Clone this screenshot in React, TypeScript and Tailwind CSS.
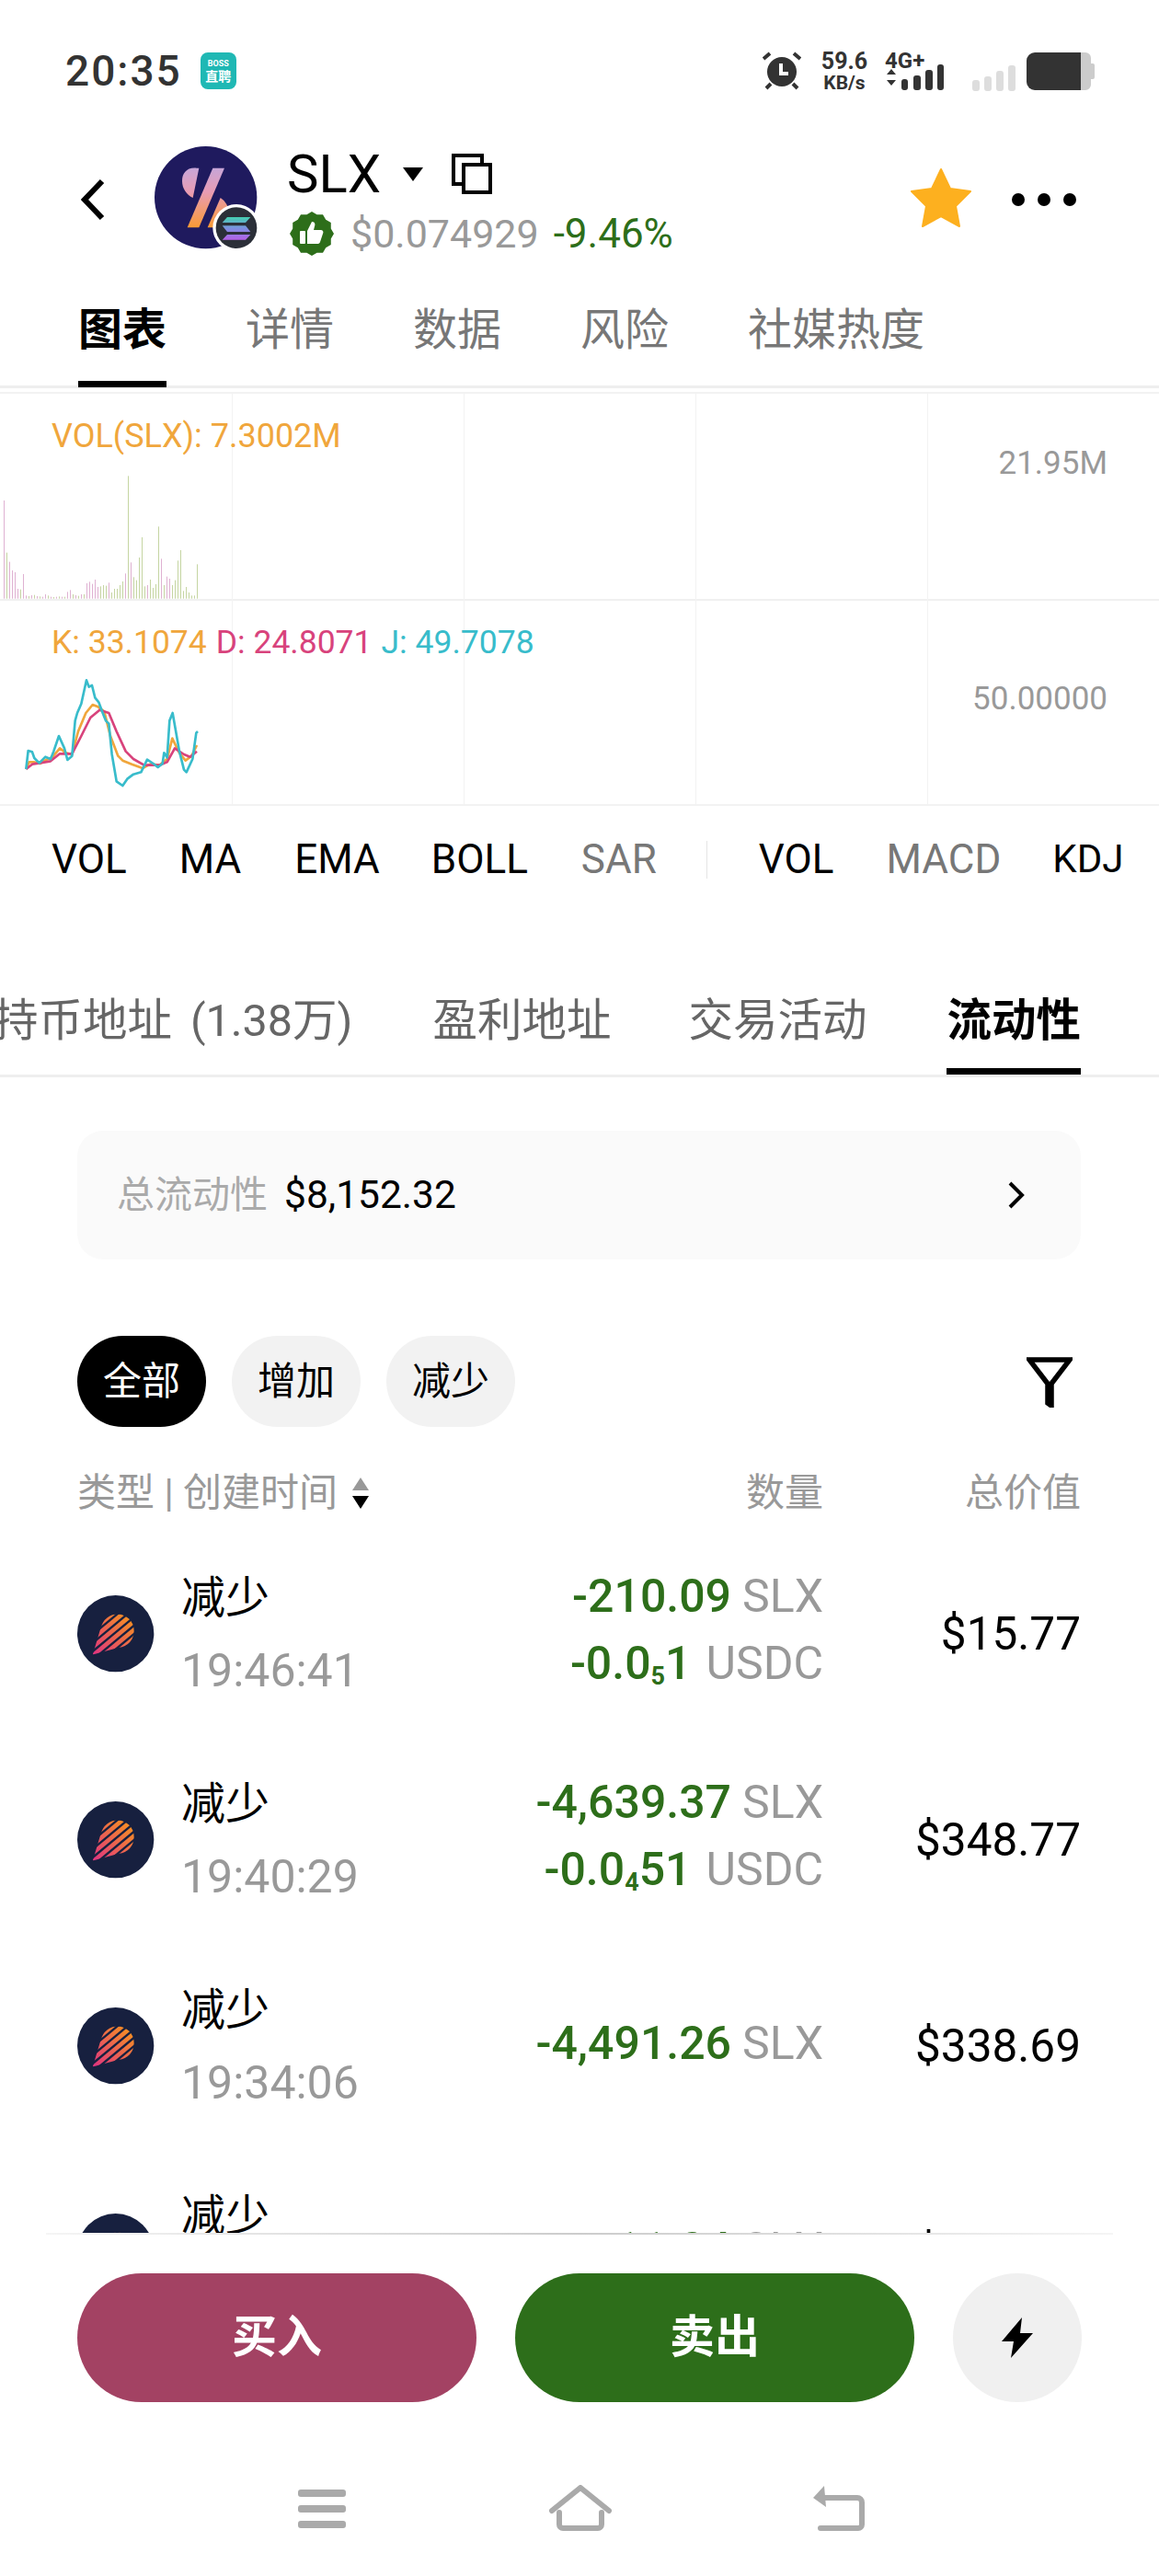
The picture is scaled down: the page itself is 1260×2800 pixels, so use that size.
import { ReactNode } from "react";

const barData: [number, "p" | "g"][] = [
  [320, "p"], [150, "g"], [120, "p"], [92, "p"], [86, "p"], [32, "p"], [30, "g"], [80, "p"], [10, "p"], [8, "g"],
  [11, "p"], [12, "g"], [8, "p"], [7, "g"], [6, "p"], [14, "p"], [10, "g"], [6, "p"], [5, "g"], [6, "p"],
  [7, "g"], [6, "p"], [6, "g"], [22, "p"], [28, "p"], [14, "g"], [11, "p"], [9, "g"], [14, "p"], [14, "g"],
  [50, "p"], [55, "p"], [48, "p"], [62, "p"], [38, "p"], [40, "g"], [44, "g"], [42, "g"], [52, "p"], [20, "g"],
  [32, "g"], [32, "g"], [44, "g"], [56, "g"], [82, "p"], [400, "g"], [118, "p"], [70, "g"], [60, "g"], [134, "g"],
  [200, "g"], [40, "g"], [44, "p"], [62, "g"], [35, "g"], [47, "g"], [235, "g"], [130, "p"], [44, "g"], [72, "p"],
  [65, "p"], [44, "g"], [60, "g"], [124, "g"], [158, "g"], [25, "g"], [38, "g"], [20, "g"], [10, "g"], [10, "g"],
  [112, "g"],
];

const jLine =
  "85,1008 92,948 105,952 112,972 128,988 148,968 165,975 175,950 192,900 210,940 220,978 235,965 245,850 252,825 265,795 282,718 290,740 300,735 310,775 322,790 335,825 345,850 355,860 365,960 380,1048 400,1062 415,1040 435,1025 460,1018 480,977 500,990 515,1002 530,990 535,955 545,970 553,850 563,825 585,950 600,1010 608,1018 628,975 640,890 645,885";
const kLine =
  "85,1008 95,985 110,985 130,990 150,978 170,970 195,940 215,955 235,960 255,885 280,825 302,798 320,805 340,820 360,900 385,965 400,980 430,992 465,1005 490,992 520,995 545,975 562,908 585,955 605,980 625,965 642,930";
const dLine =
  "85,1008 105,992 130,988 165,982 195,958 235,958 265,900 295,840 325,815 355,825 380,885 410,950 435,975 470,995 520,995 545,985 570,940 600,960 620,968 642,950";

// scalloped badge outline behind the thumb
const scallop = Array.from({ length: 24 }, (_, i) => {
  const r = i % 2 === 0 ? 24 : 21.5;
  const a = (i / 24) * Math.PI * 2;
  return `${(24 + r * Math.sin(a)).toFixed(2)},${(24 - r * Math.cos(a)).toFixed(2)}`;
}).join(" ");

// diagonal strokes of the pool logo, clipped to a comet shape
const cometStripes = [-2.5, -1.5, -0.5, 0.5, 1.5, 2.5].map((k) => {
  const cx = 175 + k * 21 * 0.64;
  const cy = 185 + k * 21 * 0.77;
  return `M${cx - 110 * 0.77} ${cy + 110 * 0.64}L${cx + 110 * 0.77} ${cy - 110 * 0.64}`;
});

function StatusBar() {
  return (
    <div className="flex h-[154px] shrink-0 items-center pl-[71px] pr-[70px] text-[#333]">
      <span className="text-[46px] font-medium leading-none tracking-[2px]">20:35</span>
      <div className="ml-[20px] flex h-[40px] w-[39px] flex-col items-center justify-center rounded-[8px] bg-[#1fb8b4] text-white">
        <span className="text-[9px] font-bold leading-[11px]">BOSS</span>
        <span className="text-[14px] font-bold leading-[16px]">直聘</span>
      </div>
      <div className="ml-auto flex items-center">
        <svg width="42" height="42" viewBox="0 0 42 42">
          <circle cx="21" cy="22" r="16" fill="#333" />
          <path d="M20 13v11h8" fill="none" stroke="#fff" strokeWidth="4" />
          <path d="M1 8l7-6M41 8l-7-6M4 40l5-5M38 40l-5-5" stroke="#333" strokeWidth="4" />
        </svg>
        <div className="ml-[22px] flex w-[50px] flex-col items-center font-bold leading-none">
          <span className="text-[25px] leading-[23px]">59.6</span>
          <span className="mt-[3px] text-[21px] leading-[18px]">KB/s</span>
        </div>
        <div className="ml-[19px] flex h-[42px] w-[64px] flex-col">
          <span className="text-[24px] font-bold leading-[20px]">4G+</span>
          <svg width="64" height="28" viewBox="0 0 64 28" className="-mt-[6px]">
            <path d="M2 11l5-6 5 6zM2 17l5 6 5-6z" fill="#333" />
            <rect x="18" y="16" width="7" height="12" rx="3" fill="#333" />
            <rect x="31" y="12" width="8" height="16" rx="3" fill="#333" />
            <rect x="44" y="6" width="8" height="22" rx="3" fill="#333" />
            <rect x="57" y="0" width="7" height="28" rx="3" fill="#333" />
          </svg>
        </div>
        <svg width="47" height="28" viewBox="0 0 47 28" className="ml-[31px] self-end">
          <rect x="0" y="16" width="8" height="12" rx="3" fill="#ddd" />
          <rect x="13" y="12" width="8" height="16" rx="3" fill="#ddd" />
          <rect x="26" y="6" width="8" height="22" rx="3" fill="#ddd" />
          <rect x="39" y="0" width="8" height="28" rx="3" fill="#ddd" />
        </svg>
        <svg width="74" height="41" viewBox="0 0 74 41" className="ml-[12px]">
          <path d="M59 0h5a6 6 0 0 1 6 6v6h2a2 2 0 0 1 2 2v13a2 2 0 0 1-2 2h-2v6a6 6 0 0 1-6 6h-5z" fill="#ccc" />
          <path d="M9 0h50v41H9a9 9 0 0 1-9-9V9a9 9 0 0 1 9-9z" fill="#333" />
        </svg>
      </div>
    </div>
  );
}

function TokenAvatar() {
  return (
    <svg width="115" height="115" viewBox="325 57 345 345" className="shrink-0">
      <defs>
        <linearGradient id="slxGrad" gradientUnits="userSpaceOnUse" x1="480" y1="128" x2="480" y2="322">
          <stop offset="0" stopColor="#c7a6d8" />
          <stop offset="0.4" stopColor="#e89cb4" />
          <stop offset="1" stopColor="#f99a35" />
        </linearGradient>
        <linearGradient id="solGrad" gradientUnits="userSpaceOnUse" x1="590" y1="288" x2="590" y2="362">
          <stop offset="0" stopColor="#45d0b0" />
          <stop offset="0.5" stopColor="#7d8fe0" />
          <stop offset="1" stopColor="#b560e8" />
        </linearGradient>
      </defs>
      <circle cx="492" cy="224" r="167" fill="#1f1a5e" />
      <path d="M462 128C430 125 415 145 415 170C415 195 430 215 450 225L470 128Z" fill="url(#slxGrad)" />
      <path d="M515 128H553L470 322H432Z" fill="url(#slxGrad)" />
      <path d="M540 225Q565 240 570 280L560 322H498Z" fill="url(#slxGrad)" />
      <circle cx="592" cy="323" r="77" fill="#fff" />
      <circle cx="592" cy="323" r="67" fill="#2b2f38" />
      <path d="M562 288H638L622 306H546Z M546 316H622L638 336H562Z M562 345H638L622 362H546Z" fill="url(#solGrad)" />
    </svg>
  );
}

function Header() {
  return (
    <div className="flex h-[130px] shrink-0 items-start pl-[88px] pr-[90px]">
      <svg width="26" height="46" viewBox="0 0 26 46" className="mt-[40px] shrink-0">
        <path d="M23 3L4 23l19 20" fill="none" stroke="#000" strokeWidth="6" />
      </svg>
      <div className="ml-[54px] mt-[5px]">
        <TokenAvatar />
      </div>
      <div className="ml-[29px] mt-[5px] flex flex-col">
        <div className="flex h-[60px] items-center">
          <span className="text-[58px] leading-[60px] text-black">SLX</span>
          <svg width="24" height="16" viewBox="0 0 24 16" className="ml-[23px]">
            <path d="M1 1h22L12 16z" fill="#000" />
          </svg>
          <svg width="44" height="44" viewBox="0 0 44 44" className="ml-[30px]">
            <rect x="2" y="2" width="31" height="31" fill="none" stroke="#000" strokeWidth="4" />
            <rect x="13" y="12" width="29" height="30" fill="#fff" stroke="#000" strokeWidth="4" />
          </svg>
        </div>
        <div className="mt-[11px] flex items-center">
          <svg width="48" height="48" viewBox="0 0 48 48" className="ml-[3px] shrink-0">
            <polygon points={scallop} fill="#2d6e1a" />
            <rect x="11" y="21" width="6" height="14" rx="1" fill="#fff" />
            <path d="M19 21l5-10c3 0 4 2 3 5l-1 4h8c2 0 3 2 2 4l-3 9c-.5 1.5-1.5 2-3 2H19z" fill="#fff" />
          </svg>
          <span className="ml-[18px] text-[43px] leading-[48px] text-[#999]">$0.074929</span>
          <span className="ml-[16px] text-[44px] leading-[48px] text-[#2d6e1a]">-9.46%</span>
        </div>
      </div>
      <svg width="68" height="66" viewBox="0 0 68 66" className="ml-auto mt-[28px] shrink-0">
        <path
          d="M34 2l10 21 22 3-16 16 4 22-20-11-20 11 4-22L2 26l22-3z"
          fill="#fdb01f"
          stroke="#fdb01f"
          strokeWidth="2"
          strokeLinejoin="round"
        />
      </svg>
      <div className="ml-[43px] mt-[56px] flex gap-[14px]">
        <span className="size-[14px] rounded-full bg-black" />
        <span className="size-[14px] rounded-full bg-black" />
        <span className="size-[14px] rounded-full bg-black" />
      </div>
    </div>
  );
}

function TopTabs() {
  const tabs = ["图表", "详情", "数据", "风险", "社媒热度"];
  return (
    <div className="flex h-[138px] shrink-0 items-end gap-[86px] border-b-[3px] border-[#eeeeee] pl-[85px]">
      {tabs.map((t, i) => (
        <div key={t} className="-mb-[2px] flex h-full flex-col justify-between">
          <span className={`mt-[49px] text-[48px] leading-[48px] ${i === 0 ? "font-bold text-black" : "text-[#777]"}`}>
            {t}
          </span>
          {i === 0 && <div className="h-[7px] w-full bg-black" />}
        </div>
      ))}
    </div>
  );
}

function Chart() {
  return (
    <div className="relative mt-[4px] h-[450px] shrink-0 border-y-[2px] border-[#f2f2f2]">
      <div className="absolute inset-x-0 top-[223px] h-[2px] bg-[#f0f0f0]" />
      <div className="absolute left-[252px] inset-y-0 w-[1px] bg-[#f3f3f3]" />
      <div className="absolute left-[504px] inset-y-0 w-[1px] bg-[#f3f3f3]" />
      <div className="absolute left-[756px] inset-y-0 w-[1px] bg-[#f3f3f3]" />
      <div className="absolute left-[1008px] inset-y-0 w-[1px] bg-[#f3f3f3]" />

      <svg width="260" height="380" viewBox="0 0 780 1140" className="absolute left-0 top-[72px]">
        {barData.map(([h, c], i) => (
          <rect key={i} x={12 + i * 9} y={452 - h} width="2.6" height={h} fill={c === "p" ? "#dba6cb" : "#bccf94"} />
        ))}
        <polyline points={kLine} fill="none" stroke="#f0a63c" strokeWidth="8" strokeLinejoin="round" />
        <polyline points={dLine} fill="none" stroke="#d8437c" strokeWidth="8" strokeLinejoin="round" />
        <polyline points={jLine} fill="none" stroke="#38bccb" strokeWidth="8" strokeLinejoin="round" />
      </svg>

      <span className="absolute left-[56px] top-[26px] text-[36px] leading-[40px] text-[#f0a63c]">VOL(SLX): 7.3002M</span>
      <span className="absolute right-[56px] top-[56px] text-[35px] leading-[40px] text-[#999]">21.95M</span>
      <div className="absolute left-[56px] top-[250px] flex gap-[10px] text-[35.5px] leading-[40px]">
        <span className="text-[#f0a63c]">K: 33.1074</span>
        <span className="text-[#d8437c]">D: 24.8071</span>
        <span className="text-[#38bccb]">J: 49.7078</span>
      </div>
      <span className="absolute right-[56px] top-[312px] text-[35px] leading-[40px] text-[#999]">50.00000</span>
    </div>
  );
}

function IndicatorRow() {
  return (
    <div className="flex h-[116px] shrink-0 items-center pl-[56px] text-[44px] leading-none text-black">
      <span>VOL</span>
      <span className="ml-[57px]">MA</span>
      <span className="ml-[58px]">EMA</span>
      <span className="ml-[56px]">BOLL</span>
      <span className="ml-[58px] text-[#777]">SAR</span>
      <div className="ml-[54px] h-[41px] w-[1px] bg-[#e5e5e5]" />
      <span className="ml-[56px]">VOL</span>
      <span className="ml-[57px] text-[#777]">MACD</span>
      <span className="ml-[56px] text-[42px]">KDJ</span>
    </div>
  );
}

function SectionTabs() {
  const tabs = ["持币地址 (1.38万)", "盈利地址", "交易活动", "流动性"];
  return (
    <div className="flex h-[179px] shrink-0 items-end justify-end gap-[87px] overflow-hidden border-b-[3px] border-[#eeeeee] pr-[85px]">
      {tabs.map((t, i) => (
        <div key={t} className={`flex h-full shrink-0 flex-col justify-between ${i === 1 ? "-mr-[3px]" : ""}`}>
          <span
            className={`mt-[94px] whitespace-nowrap text-[48.5px] leading-[48px] [word-spacing:8px] ${i === 3 ? "font-bold text-black" : "text-[#666]"}`}
          >
            {t}
          </span>
          {i === 3 && <div className="h-[7px] w-full bg-black" />}
        </div>
      ))}
    </div>
  );
}

function Pill({ active, children }: { active?: boolean; children: ReactNode }) {
  return (
    <div
      className={`flex h-[99px] w-[140px] items-center justify-center rounded-full text-[42px] leading-none ${
        active ? "bg-black text-white" : "bg-[#f2f2f2] text-black"
      }`}
    >
      {children}
    </div>
  );
}

function PoolLogo() {
  return (
    <svg width="84" height="84" viewBox="45 70 250 250" className="shrink-0">
      <defs>
        <linearGradient id="poolGrad" gradientUnits="userSpaceOnUse" x1="210" y1="140" x2="100" y2="260">
          <stop offset="0" stopColor="#f58e24" />
          <stop offset="1" stopColor="#e0357f" />
        </linearGradient>
        <clipPath id="cometClip">
          <circle cx="175" cy="185" r="54" />
          <polygon points="122,172 95,262 190,236" />
        </clipPath>
      </defs>
      <circle cx="169" cy="194" r="124" fill="#17203f" />
      <g clipPath="url(#cometClip)" stroke="url(#poolGrad)" strokeWidth="14" fill="none">
        {cometStripes.map((d) => (
          <path key={d} d={d} />
        ))}
      </g>
    </svg>
  );
}

function Amount({ value, sub, rest, unit }: { value: string; sub?: string; rest?: string; unit: string }) {
  return (
    <div className="text-[50px] leading-[48px]">
      <span className="font-medium text-[#2d6e1a]">
        {value}
        {sub && <span className="align-[-6px] text-[27px] font-bold leading-none">{sub}</span>}
        {rest}
      </span>
      <span className={`text-[#999] ${unit === "USDC" ? "ml-[16px]" : "ml-[12px]"}`}>{unit}</span>
    </div>
  );
}

type Row = {
  time: string;
  lines: { value: string; sub?: string; rest?: string; unit: string }[];
  total: string;
};

const rows: Row[] = [
  {
    time: "19:46:41",
    lines: [
      { value: "-210.09", unit: "SLX" },
      { value: "-0.0", sub: "5", rest: "1", unit: "USDC" },
    ],
    total: "$15.77",
  },
  {
    time: "19:40:29",
    lines: [
      { value: "-4,639.37", unit: "SLX" },
      { value: "-0.0", sub: "4", rest: "51", unit: "USDC" },
    ],
    total: "$348.77",
  },
  {
    time: "19:34:06",
    lines: [{ value: "-4,491.26", unit: "SLX" }],
    total: "$338.69",
  },
  {
    time: "19:27:53",
    lines: [{ value: "-11.24", unit: "SLX" }],
    total: "$118.24",
  },
];

function Liquidity() {
  return (
    <div className="flex min-h-0 flex-1 flex-col overflow-hidden pl-[84px] pr-[85px]">
      <div className="mt-[58px] flex h-[140px] shrink-0 items-center rounded-[28px] bg-[#fafafa] pl-[43px] pr-[60px]">
        <span className="text-[41px] leading-none text-[#aaa]">总流动性</span>
        <span className="ml-[18px] text-[42.5px] leading-none text-black">$8,152.32</span>
        <svg width="20" height="30" viewBox="0 0 20 30" className="ml-auto">
          <path d="M3 2l13 13L3 28" fill="none" stroke="#000" strokeWidth="4" />
        </svg>
      </div>
      <div className="mt-[83px] flex shrink-0 items-center gap-[28px]">
        <Pill active>全部</Pill>
        <Pill>增加</Pill>
        <Pill>减少</Pill>
        <svg width="50" height="56" viewBox="0 0 50 56" className="ml-auto mr-[9px]">
          <path d="M3 4h44L27 30v24l-4-3V30z" fill="none" stroke="#000" strokeWidth="5.5" strokeLinejoin="miter" />
        </svg>
      </div>
      <div className="mt-[40px] flex h-[64px] shrink-0 items-center text-[42px] leading-none text-[#999]">
        <span>类型 | 创建时间</span>
        <svg width="20" height="36" viewBox="0 0 20 36" className="ml-[15px]">
          <path d="M10 1l9 14H1z" fill="#999" />
          <path d="M10 35l9-14H1z" fill="#000" />
        </svg>
        <span className="ml-auto">数量</span>
        <span className="w-[280px] text-right">总价值</span>
      </div>
      <div className="mt-[9px] flex shrink-0 flex-col">
        {rows.map((r) => (
          <div key={r.time} className="flex h-[224px] shrink-0 items-center">
            <PoolLogo />
            <div className="ml-[29px] flex flex-col gap-[31px]">
              <span className="text-[48px] leading-[48px] text-black">减少</span>
              <span className="text-[50px] leading-[48px] text-[#999]">{r.time}</span>
            </div>
            <div className="mb-[6px] ml-auto flex flex-col items-end gap-[25px]">
              {r.lines.map((l) => (
                <Amount key={l.unit} {...l} />
              ))}
            </div>
            <span className="w-[280px] text-right text-[49.5px] leading-[48px] text-black">{r.total}</span>
          </div>
        ))}
      </div>
    </div>
  );
}

function BottomBar() {
  return (
    <div className="flex h-[373px] shrink-0 flex-col bg-white">
      <div className="mx-auto h-[2px] w-[1160px] bg-gradient-to-r from-[#f5f5f5] via-[#cccccc] to-[#f5f5f5]" />
      <div className="mt-[42px] flex gap-[42px] px-[84px]">
        <button className="flex h-[140px] w-[434px] items-center justify-center rounded-full bg-[#a34263] text-[49px] font-bold text-white">
          买入
        </button>
        <button className="flex h-[140px] w-[434px] items-center justify-center rounded-full bg-[#2d6e1a] text-[49px] font-bold text-white">
          卖出
        </button>
        <button className="flex size-[140px] shrink-0 items-center justify-center rounded-full bg-[#f0f0f0]">
          <svg width="36" height="44" viewBox="0 0 36 44">
            <path d="M23 0L1 26h13l-3 18L35 17H21z" fill="#000" />
          </svg>
        </button>
      </div>
      <div className="mt-[90px] flex items-start pl-[324px]">
        <svg width="52" height="42" viewBox="0 0 52 42" className="mt-[5px]">
          <rect x="0" y="0" width="52" height="8" rx="3" fill="#aaa" />
          <rect x="0" y="17" width="52" height="8" rx="3" fill="#aaa" />
          <rect x="0" y="34" width="52" height="8" rx="3" fill="#aaa" />
        </svg>
        <svg width="68" height="50" viewBox="0 0 68 50" className="ml-[221px]">
          <path
            d="M3 28L34 3l31 25M11 30v13a4 4 0 0 0 4 4h38a4 4 0 0 0 4-4V30"
            fill="none"
            stroke="#aaa"
            strokeWidth="6"
            strokeLinecap="round"
            strokeLinejoin="round"
          />
        </svg>
        <svg width="58" height="50" viewBox="0 0 58 50" className="ml-[217px]">
          <path d="M14 1L2 14l14 10z" fill="#aaa" />
          <path d="M10 14h40a5 5 0 0 1 5 5v24a4 4 0 0 1-4 4H10" fill="none" stroke="#aaa" strokeWidth="6" strokeLinecap="round" />
        </svg>
      </div>
    </div>
  );
}

export default function App() {
  return (
    <div className="flex h-[2800px] w-[1260px] flex-col overflow-hidden bg-white font-[Roboto,'Noto_Sans_CJK_SC',sans-serif]">
      <StatusBar />
      <Header />
      <TopTabs />
      <Chart />
      <IndicatorRow />
      <SectionTabs />
      <Liquidity />
      <BottomBar />
    </div>
  );
}
